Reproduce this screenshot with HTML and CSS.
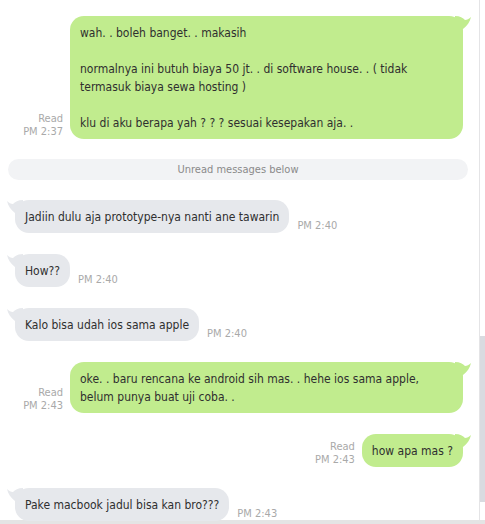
FILE: index.html
```html
<!DOCTYPE html>
<html>
<head>
<meta charset="utf-8">
<link rel="stylesheet" href="styles.css">
</head>
<body>
<div class="frame">
  <div class="chat">
    <div class="row out first">
      <div class="meta">Read<br>PM 2:37</div>
      <div class="bubble green wide">
        wah. . boleh banget. . makasih<br><br>normalnya ini butuh biaya 50 jt. . di software house. . ( tidak<br>termasuk biaya sewa hosting )<br><br>klu di aku berapa yah ? ? ? sesuai kesepakan aja. .
        <svg class="tail tail-r" width="16" height="14" viewBox="0 0 16 14"><path d="M0,0 C5,0 8,2 10,4 C12,4 14,3 16,1 C15,6 12,10 8,13 L0,13 Z"/></svg>
      </div>
    </div>

    <div class="unread">Unread messages below</div>

    <div class="row in">
      <div class="bubble grey">Jadiin dulu aja prototype-nya nanti ane tawarin
        <svg class="tail tail-l" width="16" height="14" viewBox="0 0 16 14"><path d="M16,0 C11,0 8,2 6,4 C4,4 2,3 0,1 C1,6 4,10 8,13 L16,13 Z"/></svg>
      </div>
      <div class="meta">PM 2:40</div>
    </div>

    <div class="row in">
      <div class="bubble grey">How??
        <svg class="tail tail-l" width="16" height="14" viewBox="0 0 16 14"><path d="M16,0 C11,0 8,2 6,4 C4,4 2,3 0,1 C1,6 4,10 8,13 L16,13 Z"/></svg>
      </div>
      <div class="meta">PM 2:40</div>
    </div>

    <div class="row in">
      <div class="bubble grey">Kalo bisa udah ios sama apple
        <svg class="tail tail-l" width="16" height="14" viewBox="0 0 16 14"><path d="M16,0 C11,0 8,2 6,4 C4,4 2,3 0,1 C1,6 4,10 8,13 L16,13 Z"/></svg>
      </div>
      <div class="meta">PM 2:40</div>
    </div>

    <div class="row out">
      <div class="meta">Read<br>PM 2:43</div>
      <div class="bubble green wide">
        oke. . baru rencana ke android sih mas. . hehe ios sama apple,<br>belum punya buat uji coba. .
        <svg class="tail tail-r" width="16" height="14" viewBox="0 0 16 14"><path d="M0,0 C5,0 8,2 10,4 C12,4 14,3 16,1 C15,6 12,10 8,13 L0,13 Z"/></svg>
      </div>
    </div>

    <div class="row out">
      <div class="meta">Read<br>PM 2:43</div>
      <div class="bubble green">how apa mas ?
        <svg class="tail tail-r" width="16" height="14" viewBox="0 0 16 14"><path d="M0,0 C5,0 8,2 10,4 C12,4 14,3 16,1 C15,6 12,10 8,13 L0,13 Z"/></svg>
      </div>
    </div>

    <div class="row in">
      <div class="bubble grey">Pake macbook jadul bisa kan bro???
        <svg class="tail tail-l" width="16" height="14" viewBox="0 0 16 14"><path d="M16,0 C11,0 8,2 6,4 C4,4 2,3 0,1 C1,6 4,10 8,13 L16,13 Z"/></svg>
      </div>
      <div class="meta">PM 2:43</div>
    </div>
  </div>
  <div class="scrollbar"><div class="thumb"></div></div>
</div>
<div class="bottom"></div>
</body>
</html>
```

FILE: styles.css
```css
html, body {
  margin: 0;
  padding: 0;
  background: #ffffff;
}
body {
  font-family: "DejaVu Sans Condensed", "DejaVu Sans", sans-serif;
  font-size: 12px;
  color: #2f2f2f;
  width: 485px;
  height: 524px;
  overflow: hidden;
}
.frame {
  display: flex;
  height: 520px;
}
.chat {
  flex: 1;
  padding-top: 16px;
}
.scrollbar {
  width: 6px;
  border-left: 1px solid #e4e4e6;
  padding-top: 336px;
  box-sizing: border-box;
}
.thumb {
  height: 166px;
  background: #d9dbe0;
}
.bottom {
  height: 4px;
  background: #e4e4e4;
}
.row {
  display: flex;
  align-items: flex-end;
  margin-top: 21px;
}
.row.first {
  margin-top: 0;
}
.row.out {
  justify-content: flex-end;
  padding-right: 16px;
  gap: 7px;
}
.row.in {
  padding-left: 15px;
  gap: 8px;
}
.bubble {
  position: relative;
  padding: 8px 10px 7px 10px;
  line-height: 18px;
  border-radius: 14px;
  white-space: nowrap;
}
.bubble.green {
  background: #c1ec8e;
}
.bubble.grey {
  background: #e6e8ec;
}
.bubble.wide {
  width: 393px;
  box-sizing: border-box;
}
.tail {
  position: absolute;
  top: 0;
}
.tail-r {
  right: -8px;
  fill: #c1ec8e;
}
.tail-l {
  left: -8px;
  fill: #e6e8ec;
}
.meta {
  font-size: 11px;
  line-height: 13px;
  color: #a9a9a9;
  text-align: right;
  margin-bottom: 1px;
}
.unread {
  margin: 20px 11px 20px 8px;
  height: 21px;
  line-height: 21px;
  border-radius: 11px;
  background: #f2f3f5;
  color: #8a8a8a;
  font-size: 11px;
  text-align: center;
}
.unread + .row {
  margin-top: 0;
}
```
